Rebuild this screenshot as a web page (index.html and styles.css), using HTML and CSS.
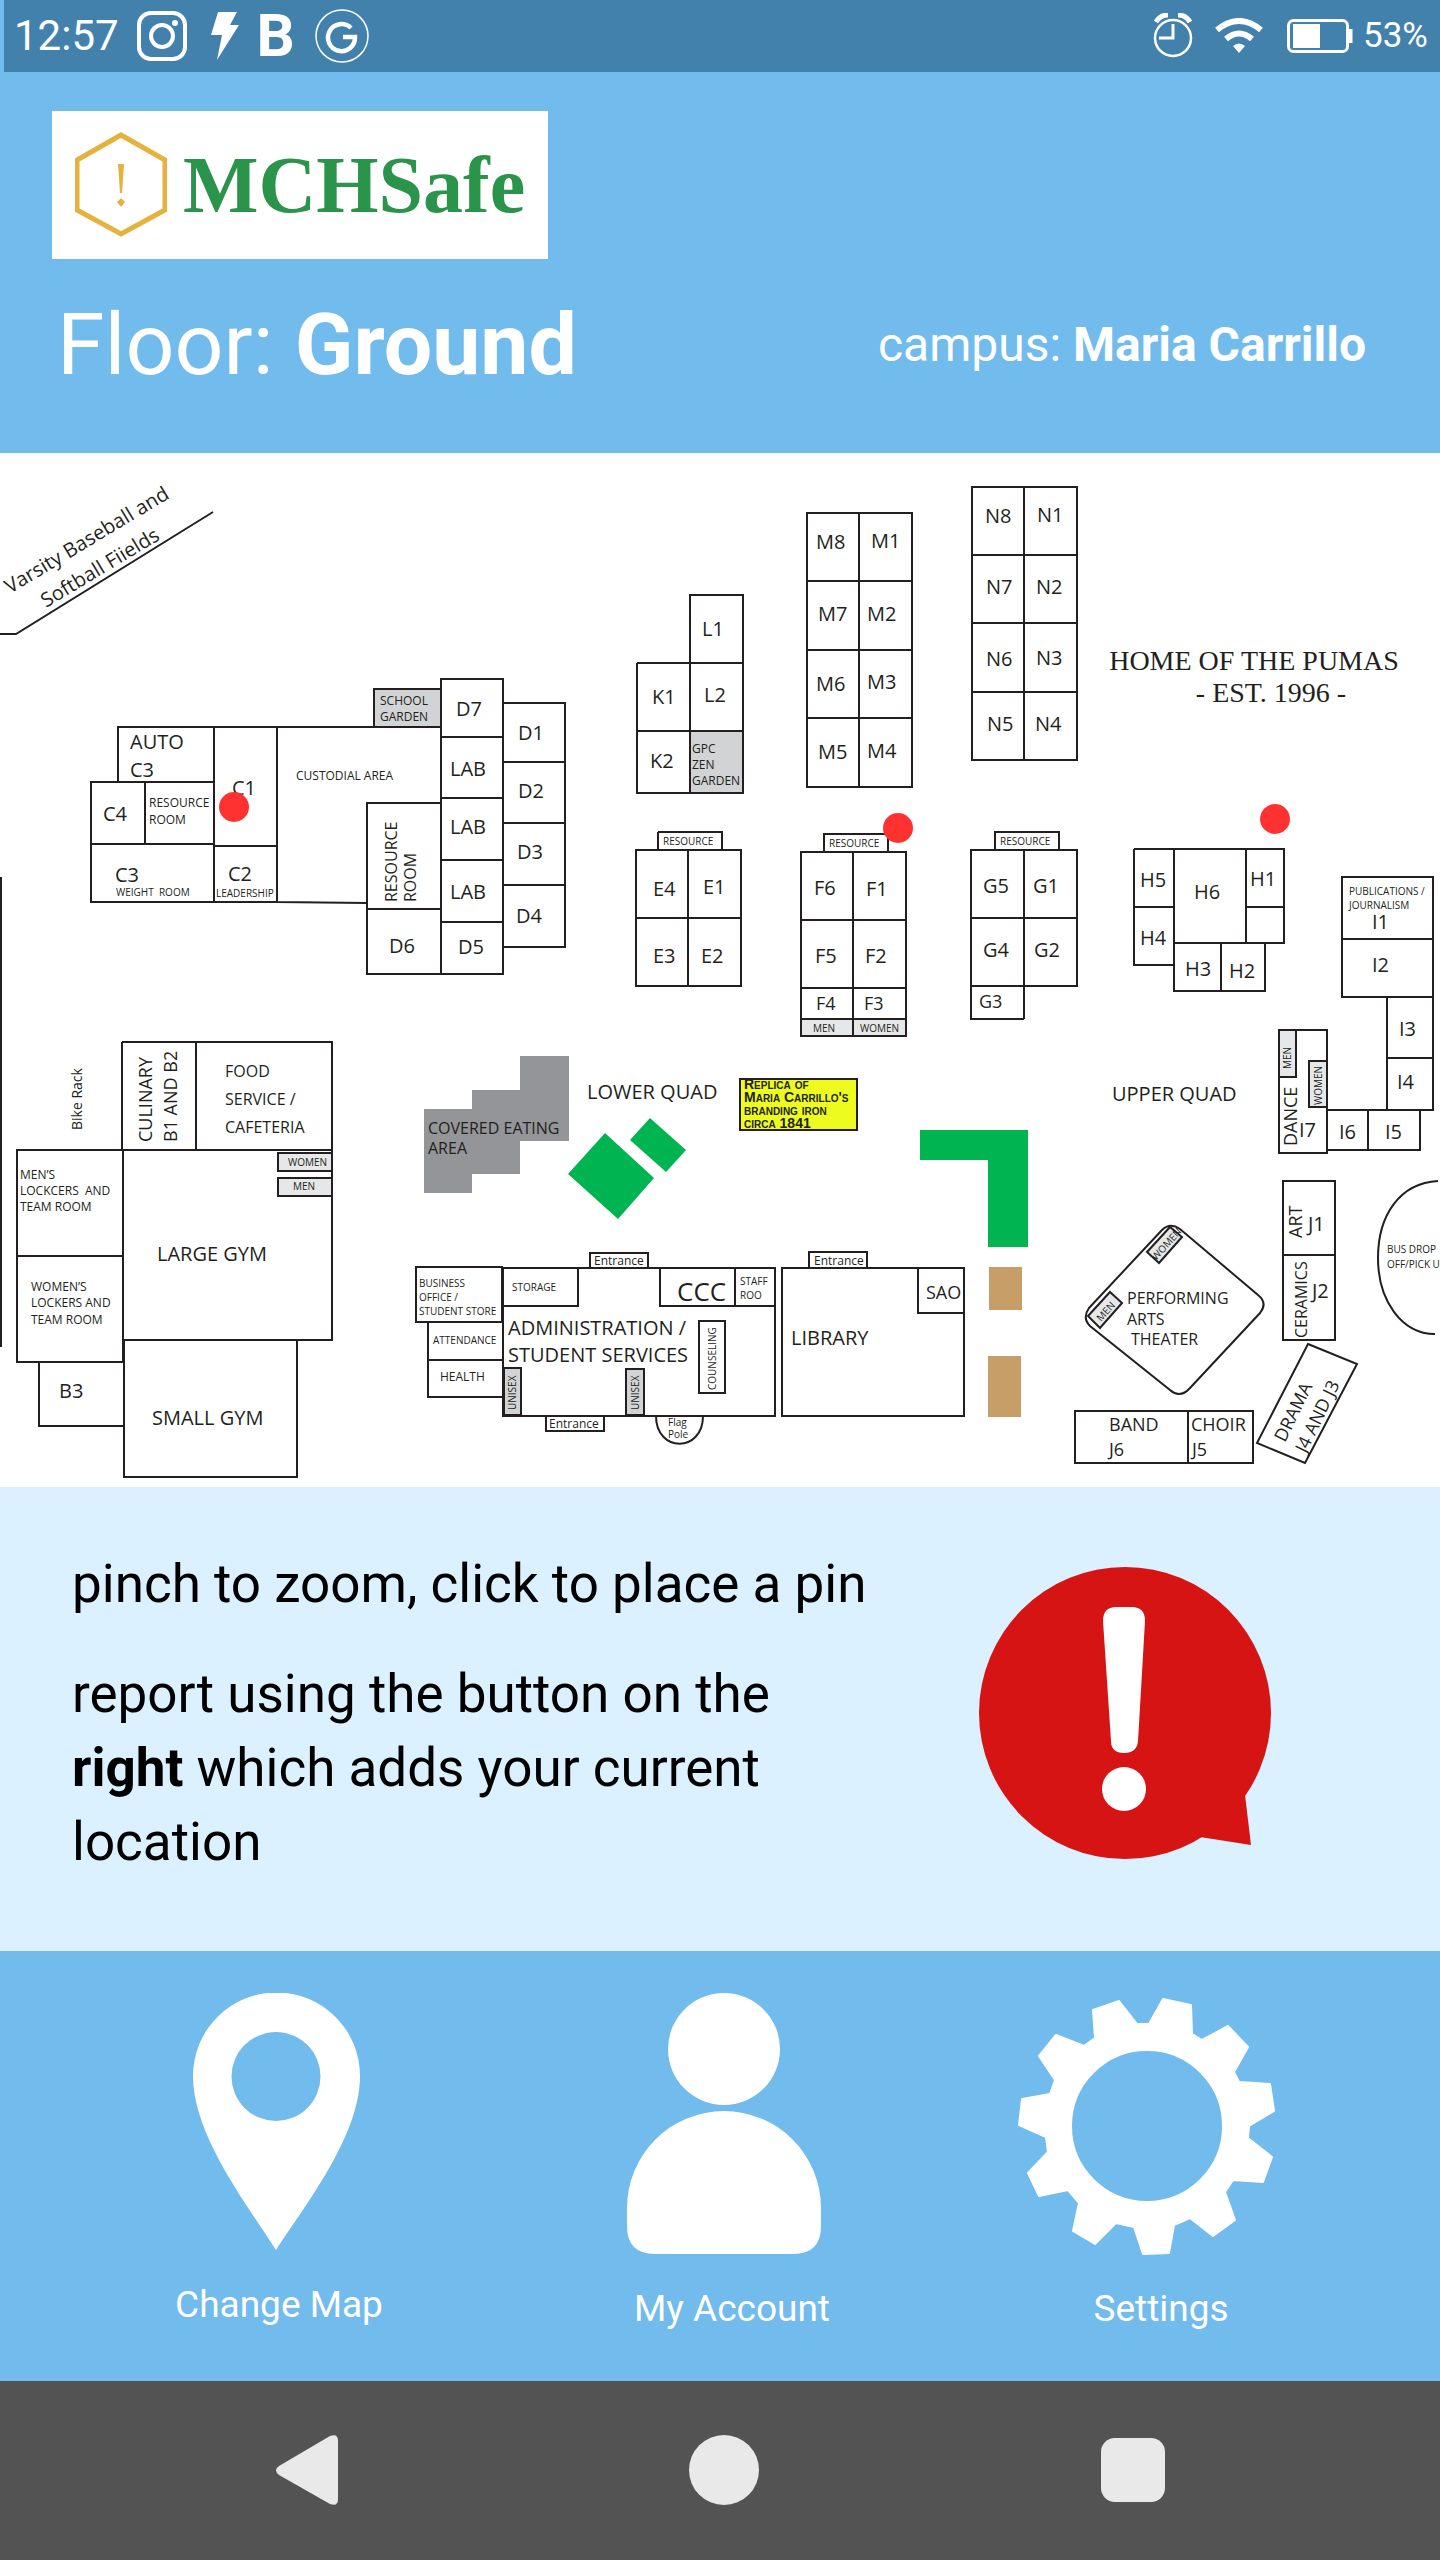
FILE: index.html
```html
<!DOCTYPE html>
<html lang="en">
<head>
<meta charset="utf-8">
<meta name="viewport" content="width=device-width, initial-scale=1">
<title>MCHSafe</title>
<link rel="stylesheet" href="styles.css">
</head>
<body>
<div class="app">
  <header class="top">
    <div class="status">
      <div class="status-group">
        <time class="clock">12:57</time>
        <svg class="ico-insta" width="50" height="50" viewBox="0 0 50 50" fill="none" stroke="#fff" aria-hidden="true">
          <rect x="2" y="2" width="46" height="46" rx="12" stroke-width="4"/>
          <circle cx="25" cy="25" r="11" stroke-width="4"/>
          <circle cx="38" cy="12" r="3" fill="#fff" stroke="none"/>
        </svg>
        <svg class="ico-bolt" width="28" height="48" viewBox="0 0 28 48" fill="#fff" aria-hidden="true"><path d="M7 0H26L19 13H28L6 48L11 23H0Z"/></svg>
        <b class="letter">B</b>
        <svg class="ico-g" width="54" height="54" viewBox="0 0 54 54" fill="none" stroke="#fff" aria-hidden="true">
          <circle cx="27" cy="27" r="26" stroke-width="1.5"/>
          <path d="M36 19A13.500 13.500 0 1 0 40 28H28" stroke-width="4.500"/>
        </svg>
      </div>
      <div class="status-group">
        <svg width="40" height="46" viewBox="0 0 40 46" fill="none" stroke="#fff" aria-hidden="true">
          <circle cx="20" cy="25" r="18" stroke-width="2.500"/>
          <path d="M20 11V25H6" stroke-width="3"/>
          <path d="M3 9Q7 2 15 2M37 9Q33 2 25 2" stroke-width="5"/>
        </svg>
        <svg class="ico-wifi" width="48" height="36" viewBox="0 0 48 36" fill="none" stroke="#fff" aria-hidden="true">
          <path d="M2 12Q24 -6 46 12" stroke-width="6"/>
          <path d="M11 21Q24 10 37 21" stroke-width="6"/>
          <path d="M18 28Q24 23 30 28L24 35Z" fill="#fff" stroke="none"/>
        </svg>
        <svg class="ico-battery" width="66" height="34" viewBox="0 0 66 34" fill="none" stroke="#fff" aria-hidden="true">
          <rect x="1.500" y="1.500" width="59" height="31" rx="5" stroke-width="3"/>
          <rect x="6" y="5" width="27" height="24" fill="#fff" stroke="none"/>
          <path d="M63 10V24" stroke-width="5"/>
        </svg>
        <span class="percent">53%</span>
      </div>
    </div>
    <div class="brand">
      <svg width="92" height="106" viewBox="0 0 92 106" fill="none" stroke="#e5b23d" stroke-width="5" aria-hidden="true">
        <path d="M46 3L90 28V78L46 102L2 78V28Z"/>
        <path d="M43 32H49L47 61H45Z" fill="#e5b23d" stroke="none"/>
        <path d="M46 66L50 70L46 75L42 70Z" fill="#e5b23d" stroke="none"/>
      </svg>
      <span class="brand-name">MCHSafe</span>
    </div>
    <div class="place">
      <h1 class="floor">Floor: <strong>Ground</strong></h1>
      <p class="campus">campus: <strong>Maria Carrillo</strong></p>
    </div>
  </header>

  <main>
    <section class="map" aria-label="Campus map">
      <svg class="plan" viewBox="0 453 1440 1034">
        <!-- fields, driveway and outer boundary -->
        <path class="wall" d="M0 634H16L213 512M1 877V1347M1438 1181C1400 1183 1378 1215 1378 1258S1402 1334 1435 1334"/>

        <!-- shaded ground -->
        <g class="garden">
          <rect x="374" y="689" width="67" height="38"/>
          <rect x="690" y="731" width="53" height="62"/>
          <rect x="504" y="1368" width="17" height="47"/>
          <rect x="626" y="1369" width="18" height="46"/>
        </g>
        <g class="restroom">
          <rect x="801" y="1019" width="52" height="17"/>
          <rect x="853" y="1019" width="53" height="17"/>
          <rect x="278" y="1153" width="54" height="18"/>
          <rect x="278" y="1178" width="54" height="18"/>
        </g>
        <path fill="#939598" d="M520 1056H569V1141H520V1174H472V1193H424V1109H472V1090H520Z"/>
        <path fill="#00b451" d="M605 1133L654 1178L618 1219L568 1174ZM650 1118L686 1150L666 1172L630 1140ZM920 1130H1028V1247H988V1160H920Z"/>
        <path fill="#c79e67" d="M989 1267H1022V1310H989ZM988 1356H1021V1417H988Z"/>
        <rect class="sign" x="740" y="1079" width="117" height="51"/>

        <!-- C and D wings -->
        <path class="wall" d="M118 727H214V782H118ZM91 782H214V902H91ZM145 782V844M91 844H214M214 727H277V902H214ZM214 846H277M277 727H441M277 902L367 903M367 803H441V974H367ZM367 909H441M441 679H503V974H441ZM441 737H503M441 798H503M441 860H503M441 922H503M503 703H565V947H503M503 762H565M503 823H565M503 885H565"/>
        <!-- K, L, M, N -->
        <path class="wall" d="M690 595H743V731H690ZM637 663H743M637 663V793H690M637 731H690M807 513H912V787H807ZM859 513V787M807 581H912M807 650H912M807 718H912M972 487H1077V760H972ZM1024 487V760M972 555H1077M972 623H1077M972 692H1077"/>
        <!-- E, F, G -->
        <path class="wall" d="M636 850H741V986H636ZM688 850V986M636 918H741M658 832H722V850M658 850V832M801 852H906V1019H801ZM853 852V1036M801 920H906M801 988H906M824 852V834H888V852M971 850H1077V986H971ZM1024 850V1019M971 918H1077M971 986V1019H1024M995 850V832H1059V850"/>
        <!-- H and I -->
        <path class="wall" d="M1134 849H1284V943H1174M1134 849V965H1174M1134 907H1174M1174 849V991H1265V943M1221 943V991M1246 849V943M1246 907H1284M1342 877H1433V997H1342ZM1342 939H1433M1387 997V1110M1433 997V1110H1327M1387 1058H1433M1327 1150H1420V1110M1368 1110V1150M1279 1030H1327V1153H1279Z"/>
        <g class="restroom">
          <rect x="1279" y="1030" width="17" height="47"/>
          <rect x="1309" y="1061" width="18" height="46"/>
        </g>
        <!-- B wing and gyms -->
        <path class="wall" d="M122 1042H332V1340H123V1150H332M122 1042V1150M196 1042V1150M123 1150H17V1362H123V1340M17 1256H123M39 1362V1426H124M124 1340V1477H297V1340"/>
        <!-- administration and library -->
        <path class="wall" d="M503 1268H775V1416H503ZM590 1268V1253H648V1268M546 1416V1431H604V1416M416 1267H502V1322H416ZM428 1322V1397H502M428 1360H502M578 1269V1306H503M660 1269V1306H775M735 1269V1306M699 1321H725V1393H699ZM656 1416C656 1453 703 1453 703 1416M782 1268H964V1416H782ZM809 1268V1252H867V1268M918 1268V1313H964"/>
        <!-- J buildings and theater -->
        <path class="wall" d="M1283 1181H1335V1340H1283ZM1283 1255H1335M1075 1411H1253V1463H1075ZM1188 1411V1463M1308 1344L1357 1364L1305 1463L1257 1443ZM1089 1308L1162 1230Q1170 1222 1180 1229L1258 1295Q1268 1303 1260 1313L1190 1388Q1180 1399 1170 1390L1090 1326Q1082 1318 1089 1308Z"/>
        <path class="restroom" d="M1088 1316L1110 1292L1122 1303L1100 1328ZM1147 1252L1170 1227L1182 1237L1159 1263Z"/>

        <g class="t20">
          <text x="130" y="749">AUTO</text><text x="130" y="777">C3</text>
          <text x="103" y="821">C4</text><text x="232" y="795">C1</text>
          <text x="115" y="882">C3</text><text x="228" y="881">C2</text>
          <text x="456" y="716">D7</text><text x="450" y="776">LAB</text>
          <text x="450" y="834">LAB</text><text x="450" y="899">LAB</text>
          <text x="389" y="953">D6</text><text x="458" y="954">D5</text>
          <text x="518" y="740">D1</text><text x="518" y="798">D2</text>
          <text x="517" y="859">D3</text><text x="516" y="923">D4</text>
          <text x="702" y="636">L1</text><text x="704" y="702">L2</text>
          <text x="652" y="704">K1</text><text x="650" y="768">K2</text>
          <text x="816" y="549">M8</text><text x="871" y="548">M1</text>
          <text x="818" y="621">M7</text><text x="867" y="621">M2</text>
          <text x="816" y="691">M6</text><text x="867" y="689">M3</text>
          <text x="818" y="759">M5</text><text x="867" y="758">M4</text>
          <text x="985" y="523">N8</text><text x="1037" y="522">N1</text>
          <text x="986" y="594">N7</text><text x="1036" y="594">N2</text>
          <text x="986" y="666">N6</text><text x="1036" y="665">N3</text>
          <text x="987" y="731">N5</text><text x="1035" y="731">N4</text>
          <text x="653" y="896">E4</text><text x="703" y="894">E1</text>
          <text x="653" y="963">E3</text><text x="701" y="963">E2</text>
          <text x="814" y="895">F6</text><text x="866" y="896">F1</text>
          <text x="815" y="963">F5</text><text x="865" y="963">F2</text>
          <text x="983" y="893">G5</text><text x="1033" y="893">G1</text>
          <text x="983" y="957">G4</text><text x="1034" y="957">G2</text>
          <text x="1140" y="887">H5</text><text x="1140" y="945">H4</text>
          <text x="1194" y="899">H6</text><text x="1250" y="886">H1</text>
          <text x="1185" y="976">H3</text><text x="1229" y="978">H2</text>
          <text x="1372" y="929">I1</text><text x="1372" y="972">I2</text>
          <text x="1399" y="1036">I3</text><text x="1397" y="1089">I4</text>
          <text x="1385" y="1139">I5</text><text x="1339" y="1139">I6</text>
          <text x="1299" y="1137">I7</text><text x="1308" y="1231">J1</text>
          <text x="1312" y="1298">J2</text><text x="59" y="1398">B3</text>
          <text x="157" y="1261">LARGE GYM</text><text x="152" y="1425">SMALL GYM</text>
          <text x="587" y="1099">LOWER QUAD</text><text x="1112" y="1101">UPPER QUAD</text>
          <text x="508" y="1335">ADMINISTRATION /</text><text x="508" y="1362">STUDENT SERVICES</text>
          <text x="791" y="1345">LIBRARY</text>
          <text transform="translate(10 594) rotate(-31)">Varsity Baseball and</text>
          <text transform="translate(46 608) rotate(-31)">Softball Fiields</text>
        </g>
        <g class="t18">
          <text x="816" y="1010">F4</text><text x="864" y="1010">F3</text><text x="979" y="1008">G3</text>
          <text x="926" y="1299">SAO</text>
          <text x="1109" y="1431">BAND</text><text x="1109" y="1456">J6</text>
          <text x="1191" y="1431">CHOIR</text><text x="1192" y="1456">J5</text>
          <text transform="translate(152 1142) rotate(-90)">CULINARY</text>
          <text transform="translate(177 1142) rotate(-90)">B1 AND B2</text>
          <text transform="translate(1297 1146) rotate(-90)">DANCE</text>
          <text transform="translate(1302 1238) rotate(-90)">ART</text>
          <text transform="translate(1285 1443) rotate(-64)">DRAMA</text>
          <text transform="translate(1306 1454) rotate(-64)">J4 AND J3</text>
        </g>
        <g class="t16">
          <text x="225" y="1077">FOOD</text><text x="225" y="1105">SERVICE /</text><text x="225" y="1133">CAFETERIA</text>
          <text x="428" y="1134">COVERED EATING</text><text x="428" y="1154">AREA</text>
          <text x="1127" y="1304">PERFORMING</text><text x="1127" y="1325">ARTS</text><text x="1131" y="1345">THEATER</text>
          <text transform="translate(397 902) rotate(-90)">RESOURCE</text>
          <text transform="translate(416 902) rotate(-90)">ROOM</text>
          <text transform="translate(1307 1338) rotate(-90)">CERAMICS</text>
        </g>
        <text class="t14" transform="translate(82 1130) rotate(-90)">Bike Rack</text>
        <g class="t12">
          <text x="149" y="807">RESOURCE</text><text x="149" y="824">ROOM</text>
          <text x="296" y="780">CUSTODIAL AREA</text>
          <text x="380" y="705">SCHOOL</text><text x="380" y="721">GARDEN</text>
          <text x="692" y="753">GPC</text><text x="692" y="769">ZEN</text><text x="692" y="785">GARDEN</text>
          <text x="20" y="1179">MEN’S</text><text x="20" y="1195">LOCKCERS&#160; AND</text><text x="20" y="1211">TEAM ROOM</text>
          <text x="31" y="1291">WOMEN’S</text><text x="31" y="1307">LOCKERS AND</text><text x="31" y="1324">TEAM ROOM</text>
          <text x="594" y="1265">Entrance</text><text x="814" y="1265">Entrance</text><text x="549" y="1428">Entrance</text>
          <text x="440" y="1381">HEALTH</text>
        </g>
        <g class="t10">
          <text x="116" y="896">WEIGHT&#160; ROOM</text><text x="216" y="897">LEADERSHIP</text>
          <text x="663" y="845">RESOURCE</text><text x="829" y="847">RESOURCE</text><text x="1000" y="845">RESOURCE</text>
          <text x="813" y="1032">MEN</text><text x="860" y="1032">WOMEN</text>
          <text x="288" y="1166">WOMEN</text><text x="293" y="1190">MEN</text>
          <text x="1349" y="895">PUBLICATIONS /</text><text x="1349" y="909">JOURNALISM</text>
          <text x="419" y="1287">BUSINESS</text><text x="419" y="1301">OFFICE /</text><text x="419" y="1315">STUDENT STORE</text>
          <text x="433" y="1344">ATTENDANCE</text><text x="512" y="1291">STORAGE</text>
          <text x="740" y="1285">STAFF</text><text x="740" y="1299">ROO</text>
          <text x="668" y="1426">Flag</text><text x="668" y="1438">Pole</text>
          <text x="1387" y="1253">BUS DROP</text><text x="1387" y="1268">OFF/PICK U</text>
          <text transform="translate(716 1390) rotate(-90)">COUNSELING</text>
          <text transform="translate(516 1410) rotate(-90)">UNISEX</text>
          <text transform="translate(639 1410) rotate(-90)">UNISEX</text>
          <text transform="translate(1291 1069) rotate(-90)">MEN</text>
          <text transform="translate(1322 1105) rotate(-90)">WOMEN</text>
          <text transform="translate(1101 1322) rotate(-48)">MEN</text>
          <text transform="translate(1156 1261) rotate(-48)">WOMEN</text>
        </g>
        <text class="t26" x="677" y="1301">CCC</text>
        <g class="plaque">
          <text x="744" y="1089">Replica of</text><text x="744" y="1102">Maria Carrillo's</text>
          <text x="744" y="1115">branding iron</text><text x="744" y="1128">circa 1841</text>
        </g>
        <g class="motto">
          <text x="1254" y="670">HOME OF THE PUMAS</text>
          <text x="1271" y="702">- EST. 1996 -</text>
        </g>

        <!-- report pins -->
        <g fill="#ff3131">
          <circle cx="234" cy="807" r="15"/><circle cx="898" cy="828" r="15"/><circle cx="1275" cy="819" r="15"/>
        </g>
      </svg>
    </section>

    <section class="info">
      <div class="help">
        <p>pinch to zoom, click to place a pin</p>
        <p>report using the button on the <strong>right</strong> which adds your current location</p>
      </div>
      <button class="report" type="button" aria-label="Report">
        <svg width="292" height="292" viewBox="0 0 292 292" aria-hidden="true">
          <circle cx="146" cy="146" r="146" fill="#d71414"/>
          <path fill="#d71414" d="M266 228L272 278L221 270L200 220Z"/>
          <path fill="#fff" d="M124 54Q124 40 137 40H153Q166 40 166 54L159 174Q158 186 145 186T132 174Z"/>
          <circle cx="145" cy="222" r="22" fill="#fff"/>
        </svg>
      </button>
    </section>
  </main>

  <nav class="tabs" aria-label="Main">
    <button class="tab" type="button">
      <svg width="334" height="261" viewBox="0 0 334 261" fill="#fff" aria-hidden="true">
        <path fill-rule="evenodd" d="M164 257C134 210 81 142 81 83A83.500 83.500 0 0 1 248 83C248 142 195 210 164 257ZM164 39A44.500 44.500 0 1 0 164 128A44.500 44.500 0 1 0 164 39Z"/>
      </svg>
      Change Map
    </button>
    <button class="tab" type="button">
      <svg width="210" height="265" viewBox="0 0 210 265" fill="#fff" aria-hidden="true">
        <circle cx="97" cy="56" r="56"/>
        <path d="M0 215A97 97 0 0 1 194 215V233Q194 261 166 261H28Q0 261 0 233Z"/>
      </svg>
      My Account
    </button>
    <button class="tab" type="button">
      <svg width="286" height="265" viewBox="0 -5 286 265" fill="#fff" aria-hidden="true">
        <path fill-rule="evenodd" stroke="#fff" stroke-width="2" stroke-linejoin="round" d="M101 3L119 26H131L145 1L173 7L174 36L184 42L210 28L230 49L216 74L221 84L252 86L256 113L231 128L230 140L254 159L245 184L215 182L207 194L217 222L195 238L172 220L156 227L151 255L125 256L116 229L98 225L77 246L55 233L61 205L50 192L21 198L10 175L30 154L28 139L1 127L4 101L32 96L37 82L21 58L38 37L66 48L77 40L75 12ZM129 52A76 76 0 1 0 129 204A76 76 0 1 0 129 52Z"/>
      </svg>
      Settings
    </button>
  </nav>

  <div class="keys">
    <button class="key" type="button" aria-label="Back">
      <svg width="70" height="70" viewBox="0 0 70 70" fill="#e9e9e9" aria-hidden="true"><path d="M3 31L54 1Q62 -2 62 6V64Q62 72 54 69L3 40Q-3 35 3 31Z"/></svg>
    </button>
    <button class="key" type="button" aria-label="Home">
      <svg width="70" height="70" viewBox="0 0 70 70" fill="#e9e9e9" aria-hidden="true"><circle cx="35" cy="35" r="35"/></svg>
    </button>
    <button class="key" type="button" aria-label="Recent apps">
      <svg width="64" height="70" viewBox="0 0 64 70" fill="#e9e9e9" aria-hidden="true"><rect y="3" width="64" height="64" rx="14"/></svg>
    </button>
  </div>
</div>
</body>
</html>
```
FILE: styles.css
```css
* { box-sizing: border-box; }
body { margin: 0; font-family: Roboto, "Liberation Sans", sans-serif; background: #535353; }
svg { display: block; flex: none; }
h1, p { margin: 0; font-weight: 400; }
strong { font-weight: 700; }
button { padding: 0; border: 0; background: none; color: inherit; font: inherit; cursor: pointer; }

.top { background: #71bbed; color: #fff; }

.status {
  display: flex;
  justify-content: space-between;
  align-items: center;
  height: 72px;
  margin-left: 4px;
  padding: 0 12px 0 10px;
  background: #4281ab;
}
.status-group { display: flex; align-items: center; }
.clock { font-size: 42px; line-height: 72px; }
.ico-insta { margin-left: 18px; }
.ico-bolt { margin-left: 24px; }
.letter { margin-left: 18px; font-size: 60px; line-height: 72px; }
.ico-g { margin-left: 20px; }
.ico-wifi { margin-left: 22px; }
.ico-battery { margin-left: 24px; }
.percent { margin-left: 10px; font-size: 35px; line-height: 72px; }

.brand {
  display: flex;
  align-items: center;
  gap: 16px;
  width: fit-content;
  height: 148px;
  margin: 39px 52px 0;
  padding: 0 23px;
  background: #fff;
}
.brand-name {
  font-family: "Liberation Serif", serif;
  font-size: 80px;
  font-weight: 700;
  line-height: 100px;
  color: #2b944b;
}

.place {
  display: flex;
  flex-wrap: wrap;
  justify-content: space-between;
  align-items: center;
  padding: 36px 74px 58px 57px;
}
.floor { font-size: 86px; line-height: 100px; }
.campus { font-size: 48px; line-height: 60px; }

.map { background: #fff; }
.plan { width: 100%; height: auto; font-family: "Open Sans", "Noto Sans", sans-serif; fill: #231f20; }
.wall { fill: none; stroke: #231f20; stroke-width: 2; }
.garden, .restroom, .sign { fill: #d1d3d4; stroke: #231f20; stroke-width: 2; }
.restroom { fill: #e6e7e8; }
.sign { fill: #edfb1f; }
.t10 { font-size: 10px; }
.t12 { font-size: 12px; }
.t14 { font-size: 14px; }
.t16 { font-size: 16px; }
.t18 { font-size: 18px; }
.t20 { font-size: 20px; }
.t26 { font-size: 26px; }
.plaque { font-family: "Liberation Sans", sans-serif; font-size: 14px; font-weight: 700; font-variant: small-caps; }
.motto { font-family: "Liberation Serif", serif; font-size: 28px; text-anchor: middle; }

.info {
  display: flex;
  justify-content: space-between;
  align-items: center;
  gap: 40px;
  padding: 60px 169px 72px 72px;
  background: #dbf1ff;
  color: #000;
}
.help {
  display: grid;
  gap: 36px;
  max-width: 815px;
  font-size: 53px;
  line-height: 74px;
}

.tabs {
  display: flex;
  justify-content: space-between;
  align-items: flex-start;
  padding: 42px 136px 48px 112px;
  background: #71bbed;
  color: #fff;
}
.tab {
  display: flex;
  flex-direction: column;
  align-items: center;
  gap: 27px;
  font-size: 37px;
  line-height: 48px;
}

.keys {
  display: flex;
  justify-content: space-between;
  align-items: center;
  padding: 54px 275px 55px 276px;
  background: #535353;
}
```
